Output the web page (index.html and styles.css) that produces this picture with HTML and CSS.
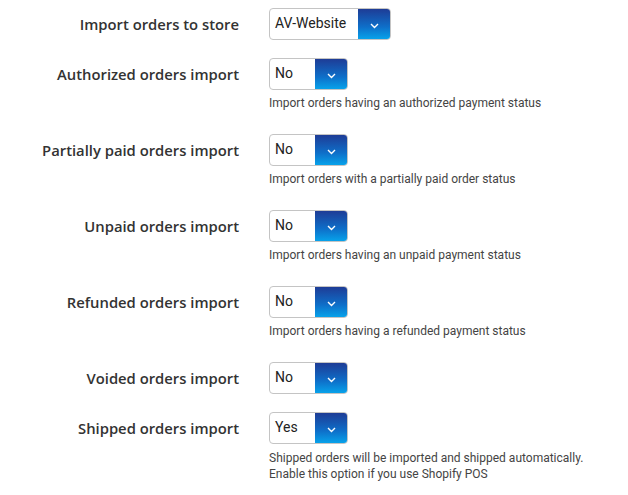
FILE: index.html
```html
<!DOCTYPE html>
<html lang="en">
<head>
    <meta charset="UTF-8">
    <title>Import settings</title>
    <link rel="stylesheet" href="styles.css">
</head>
<body>
    <div class="settings">
        <div class="row">
            <label class="label">Import orders to store</label>
            <div class="field">
                <div class="select wide"><span class="value">AV-Website</span><span class="arrow"><svg width="9" height="6" viewBox="0 0 9 6"><path d="M1 1l3.5 3.5L8 1" fill="none" stroke="#fff" stroke-width="1.4"/></svg></span></div>
            </div>
        </div>
        <div class="row">
            <label class="label">Authorized orders import</label>
            <div class="field">
                <div class="select"><span class="value">No</span><span class="arrow"><svg width="9" height="6" viewBox="0 0 9 6"><path d="M1 1l3.5 3.5L8 1" fill="none" stroke="#fff" stroke-width="1.4"/></svg></span></div>
                <p class="help">Import orders having an authorized payment status</p>
            </div>
        </div>
        <div class="row">
            <label class="label">Partially paid orders import</label>
            <div class="field">
                <div class="select"><span class="value">No</span><span class="arrow"><svg width="9" height="6" viewBox="0 0 9 6"><path d="M1 1l3.5 3.5L8 1" fill="none" stroke="#fff" stroke-width="1.4"/></svg></span></div>
                <p class="help">Import orders with a partially paid order status</p>
            </div>
        </div>
        <div class="row">
            <label class="label">Unpaid orders import</label>
            <div class="field">
                <div class="select"><span class="value">No</span><span class="arrow"><svg width="9" height="6" viewBox="0 0 9 6"><path d="M1 1l3.5 3.5L8 1" fill="none" stroke="#fff" stroke-width="1.4"/></svg></span></div>
                <p class="help">Import orders having an unpaid payment status</p>
            </div>
        </div>
        <div class="row">
            <label class="label">Refunded orders import</label>
            <div class="field">
                <div class="select"><span class="value">No</span><span class="arrow"><svg width="9" height="6" viewBox="0 0 9 6"><path d="M1 1l3.5 3.5L8 1" fill="none" stroke="#fff" stroke-width="1.4"/></svg></span></div>
                <p class="help">Import orders having a refunded payment status</p>
            </div>
        </div>
        <div class="row">
            <label class="label">Voided orders import</label>
            <div class="field">
                <div class="select"><span class="value">No</span><span class="arrow"><svg width="9" height="6" viewBox="0 0 9 6"><path d="M1 1l3.5 3.5L8 1" fill="none" stroke="#fff" stroke-width="1.4"/></svg></span></div>
            </div>
        </div>
        <div class="row">
            <label class="label">Shipped orders import</label>
            <div class="field">
                <div class="select"><span class="value">Yes</span><span class="arrow"><svg width="9" height="6" viewBox="0 0 9 6"><path d="M1 1l3.5 3.5L8 1" fill="none" stroke="#fff" stroke-width="1.4"/></svg></span></div>
                <p class="help long">Shipped orders will be imported and shipped automatically.<br>Enable this option if you use Shopify POS</p>
            </div>
        </div>
    </div>
</body>
</html>
```

FILE: styles.css
```css
* {
    margin: 0;
    padding: 0;
    box-sizing: border-box;
}

body {
    background: #fff;
    font-family: "Roboto", "Liberation Sans", sans-serif;
}

.settings {
    padding-top: 8px;
}

/* One setting per row: label on the left, control on the right */
.row {
    display: grid;
    grid-template-columns: 239px 1fr;
    column-gap: 30px;
    margin-bottom: 18px;
}

.label {
    font-family: "Open Sans", sans-serif;
    font-weight: 600;
    font-size: 14.8px;
    color: #333;
    text-align: right;
    line-height: 32px;
}

.select {
    display: flex;
    width: 79px;
    height: 32px;
    border: 1px solid #c4c4c4;
    border-radius: 4px;
    overflow: hidden;
    background: #fff;
}

.select.wide {
    width: 122px;
}

.value {
    flex: 1;
    padding-left: 5px;
    font-size: 14px;
    line-height: 28px;
    color: #222;
}

.arrow {
    width: 32px;
    display: flex;
    justify-content: center;
    align-items: flex-end;
    padding-bottom: 10px;
    background: linear-gradient(to bottom, #1e3c96, #0e6fc9 60%, #07a2ea);
}

.help {
    padding-top: 5px;
    padding-bottom: 5px;
    font-size: 12px;
    line-height: 16px;
    color: #444;
}

.help.long {
    padding-top: 6px;
}
```
